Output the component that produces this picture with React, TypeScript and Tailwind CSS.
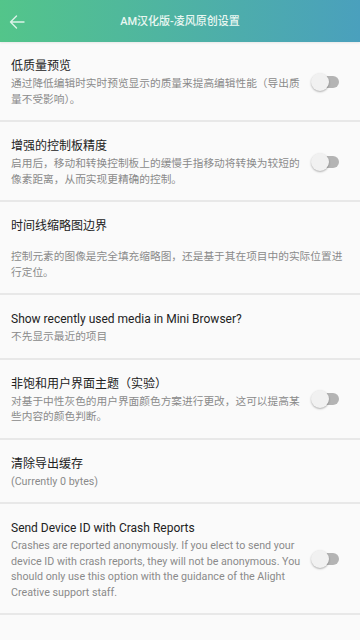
import React from "react";

type Item = {
  title: string;
  sub: string;
  toggle: boolean;
  gap?: boolean;
};

const items: Item[] = [
  {
    title: "低质量预览",
    sub: "通过降低编辑时实时预览显示的质量来提高编辑性能（导出质量不受影响）。",
    toggle: true,
  },
  {
    title: "增强的控制板精度",
    sub: "启用后，移动和转换控制板上的缓慢手指移动将转换为较短的像素距离，从而实现更精确的控制。",
    toggle: true,
  },
  {
    title: "时间线缩略图边界",
    sub: "控制元素的图像是完全填充缩略图，还是基于其在项目中的实际位置进行定位。",
    toggle: false,
    gap: true,
  },
  {
    title: "Show recently used media in Mini Browser?",
    sub: "不先显示最近的项目",
    toggle: false,
  },
  {
    title: "非饱和用户界面主题（实验）",
    sub: "对基于中性灰色的用户界面颜色方案进行更改，这可以提高某些内容的颜色判断。",
    toggle: true,
  },
  {
    title: "清除导出缓存",
    sub: "(Currently 0 bytes)",
    toggle: false,
  },
  {
    title: "Send Device ID with Crash Reports",
    sub: "Crashes are reported anonymously. If you elect to send your device ID with crash reports, they will not be anonymous. You should only use this option with the guidance of the Alight Creative support staff.",
    toggle: true,
  },
];

function Toggle() {
  return (
    <div className="relative w-[30px] h-[18px] shrink-0">
      <div className="absolute left-[4px] right-[2px] top-[3px] h-[12px] rounded-full bg-[#b4b4b4]" />
      <div className="absolute left-0 top-0 w-[18px] h-[18px] rounded-full bg-[#f1f1f1] shadow-[0_1px_2px_rgba(0,0,0,0.3)]" />
    </div>
  );
}

export default function App() {
  return (
    <div
      className="w-[360px] h-[640px] bg-[#fafafa] overflow-hidden"
      style={{ fontFamily: 'Roboto, "Noto Sans CJK SC", sans-serif' }}
    >
      <div className="relative h-[42px] flex items-center justify-center bg-[linear-gradient(to_right,#53c58a,#4aa0bd)] shadow-[0_1px_2px_rgba(0,0,0,0.08)]">
        <svg
          className="absolute left-[9px] top-[14px]"
          width="16"
          height="16"
          viewBox="0 0 16 16"
          fill="none"
          stroke="#dcf3e8"
          strokeWidth="1.4"
          strokeLinecap="round"
          strokeLinejoin="round"
        >
          <path d="M15 8H1.5M7.5 2L1.5 8l6 6" />
        </svg>
        <span className="text-[11px] font-medium text-[#eaf7f2] leading-none">
          AM汉化版-凌风原创设置
        </span>
      </div>
      <div className="flex flex-col">
        {items.map((it, i) => (
          <div key={i} className="flex flex-col">
            <div className="flex items-center pl-[11px] pt-[14px] pb-[13px]">
              <div
                className={
                  it.toggle
                    ? "w-[294px] flex flex-col"
                    : "w-[337px] flex flex-col"
                }
              >
                <div className="text-[12px] leading-[20px] text-[#222222]">
                  {it.title}
                </div>
                <div
                  className={
                    it.gap
                      ? "mt-[13px] text-[10.7px] leading-[15.5px] text-[#8a8a8a]"
                      : "text-[10.7px] leading-[15.5px] text-[#8a8a8a]"
                  }
                >
                  {it.sub}
                </div>
              </div>
              {it.toggle && (
                <div className="ml-auto mr-[19px]">
                  <Toggle />
                </div>
              )}
            </div>
            <div className="h-[2px] bg-[#e8e8e8]" />
          </div>
        ))}
      </div>
    </div>
  );
}
